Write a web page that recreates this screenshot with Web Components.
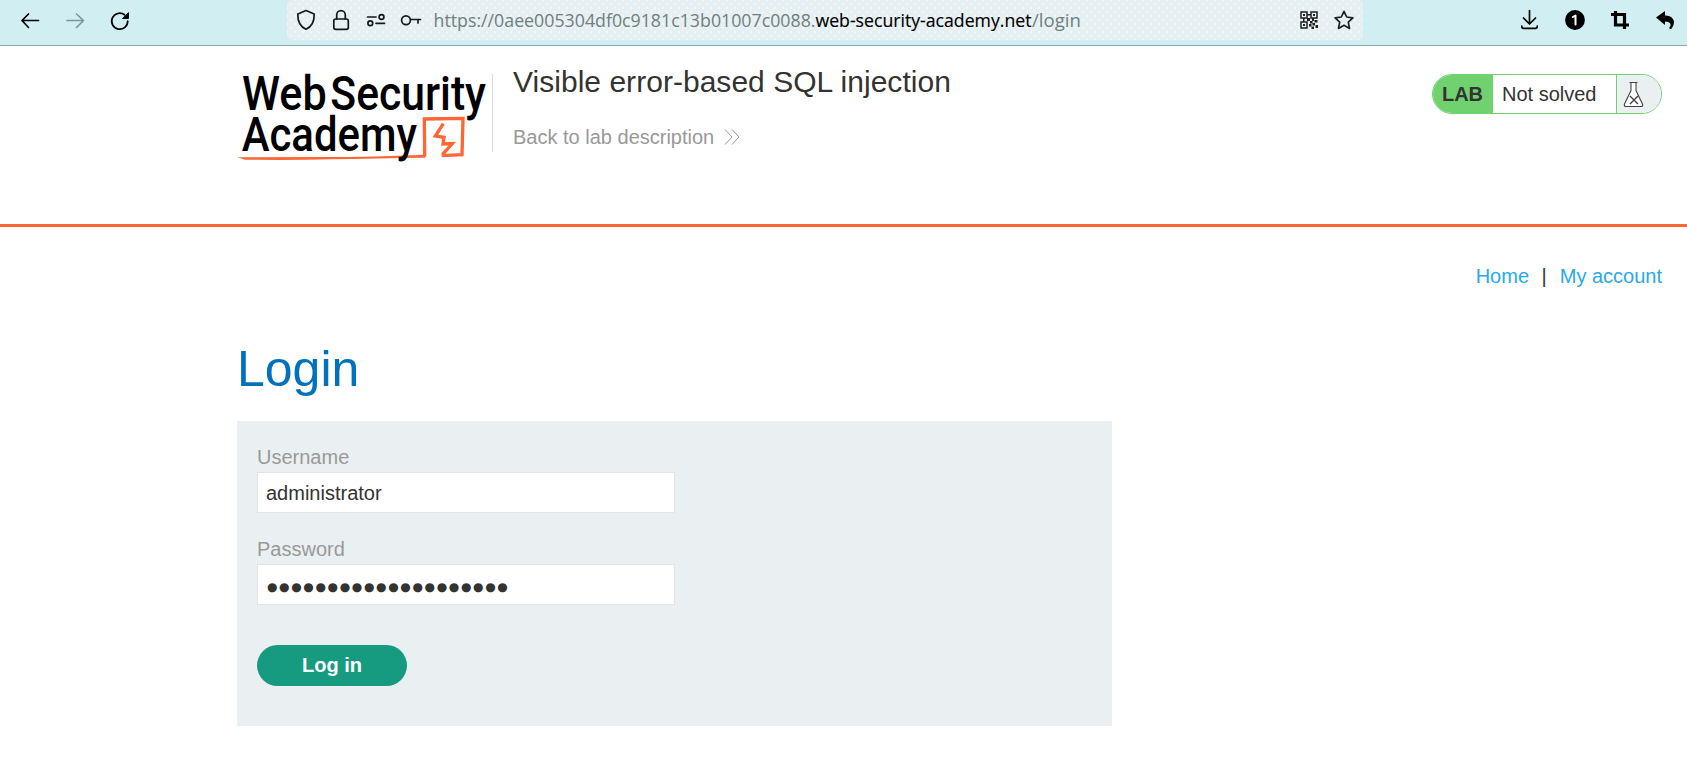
<!DOCTYPE html>
<html lang="en">
<head>
<meta charset="utf-8">
<title>Visible error-based SQL injection</title>
<style>
html,body{margin:0;height:100%;background:#fff;overflow:hidden}
body{font:20px/24px "Liberation Sans",Arial,sans-serif;color:#333332}
</style>
</head>
<body>
<lab-page></lab-page>
<script>
function define(name, html){
  const t = document.createElement('template');
  t.innerHTML = html;
  customElements.define(name, class extends HTMLElement{
    constructor(){ super(); this.attachShadow({mode:'open'}).append(t.content.cloneNode(true)); }
  });
}

define('browser-bar', `<style>
:host{display:flex;height:45px;background:#d1eef3;border-bottom:1px solid #8fa8ab;box-sizing:content-box}
svg{display:block;flex:none;fill:none;stroke:#000;stroke-width:1.7;stroke-linecap:round;stroke-linejoin:round}
.nav{width:287px;flex:none}
.url{width:1076px;height:40px;flex:none;display:flex;border-radius:5px;background-color:#e6eff2;background-image:radial-gradient(circle,#edf9fa 0.8px,transparent 1.1px),radial-gradient(circle,#edf9fa 0.8px,transparent 1.1px);background-size:8px 8px;background-position:0 0,4px 4px}
text{font:18.6px "Open Sans","Noto Sans",sans-serif;stroke:none;fill:#70807f}
.d{fill:#000;stroke:#000;stroke-width:.15}
</style>
<svg class="nav" width="287" height="45" viewBox="0 0 287 45">
<path d="M38.500 20.500H22M28.500 14L22 20.500L28.500 27.500"/>
<path stroke="#7f9799" d="M67 20.500H83.500M76.500 14L83.500 20.500L76.500 27.500"/>
<path d="M127.700 21A8 8 0 1 1 124.500 14.800"/><path d="M128.500 13v5.500h-5.500z" fill="#000" stroke-width="1"/>
</svg>
<div class="url">
<svg width="1076" height="40" viewBox="287 0 1076 40">
<g stroke="#15191a">
<path d="M306 10.500L314.200 14Q314.500 25.500 306 29.200Q297.500 25.500 297.800 14Z"/>
<rect x="333.800" y="19" width="14.500" height="10.300" rx="2"/><path d="M336.700 19v-4a4.300 4.300 0 0 1 8.600 0v4"/>
<path d="M367.500 17h8.500M376 23.300h8.500"/><circle cx="381.500" cy="17" r="2.400"/><circle cx="370.300" cy="23.300" r="2.400"/>
<circle cx="406" cy="20.200" r="4.400"/><path d="M411 19.500h9.500M418 19.500v3.500"/>
</g>
<text x="433.500" y="27" textLength="382" lengthAdjust="spacingAndGlyphs">https://0aee005304df0c9181c13b01007c0088.</text>
<text class="d" x="815.500" y="27" textLength="216" lengthAdjust="spacingAndGlyphs">web-security-academy.net</text>
<text x="1032" y="27" textLength="49" lengthAdjust="spacingAndGlyphs">/login</text>
<g stroke="#1c2021" stroke-width="1.500" stroke-linejoin="miter" stroke-linecap="butt"><rect x="1301" y="12" width="6" height="6"/><rect x="1311" y="12" width="6" height="6"/><rect x="1301" y="22" width="6" height="6"/></g>
<path stroke="none" fill="#1c2021" d="M1303 14h2v2h-2zM1313 14h2v2h-2zM1303 24h2v2h-2zM1307 14h4v1.500h-4zM1303 18h1.500v4h-1.500zM1307 18h3v3h-3zM1312 18h2v3h-2zM1310 21h2.500v2.500h-2.500zM1314.500 20h3v2.500h-3zM1312.500 23h2.500v2.500h-2.500zM1309 24h2.500v2.500h-2.500zM1315.500 25h2.500v3h-2.500zM1311.500 26.500h2.500v2.500h-2.500z"/>
<path stroke="#1c2021" d="M1344 11.300l2.700 5.700 6.200.8-4.600 4.300 1.200 6.300-5.500-3.100-5.500 3.100 1.200-6.300-4.600-4.300 6.200-.8z"/>
</svg></div>
<svg width="324" height="45" viewBox="1363 0 324 45">
<path d="M1529.500 10.500v13M1523.500 18l6 6 6-6M1521.800 26v.5q0 1.800 1.800 1.800h11.800q1.800 0 1.800-1.800v-.5"/>
<circle cx="1575" cy="20" r="9.900" fill="#000" stroke="none"/><path stroke="#fff" stroke-width="2" d="M1572.800 17l2.700-1.500v9"/>
<path stroke-linecap="butt" stroke-linejoin="miter" stroke-width="3.200" d="M1611 14.500h13.500v14.500M1615.500 11v14h13.500"/>
<path stroke="none" fill="#000" d="M1656 17.500l9-6.500v4.500c8 0 12 6 6.500 13.200-1 .5-2 .2-2.500-.7 3.500-3.500 1-6.500-4-6.500v3.500z"/>
</svg>`);

define('academy-logo', `<style>:host{display:block;width:250px;height:94px}svg{display:block;overflow:visible}text{font:500 144px Roboto,sans-serif;fill:#000}</style>
<svg width="250" height="94" viewBox="36 30 750 282">
<text x="51" y="151" textLength="254" lengthAdjust="spacingAndGlyphs">Web</text>
<text x="316" y="151" textLength="467" lengthAdjust="spacingAndGlyphs">Security</text>
<path fill="none" stroke="#f63" stroke-width="10" d="M599 290L598 177L714 175L711 284L650 287M655 191L631 228L657 232L654 252L682 251L652 284"/>
<path fill="#f63" d="M37 292Q180 291 310 291T600 284V293Q450 295 320 298T60 299Z"/>
<text x="50" y="272" textLength="526" lengthAdjust="spacingAndGlyphs">Academy</text>
</svg>`);

define('lab-status', `<style>
:host{display:flex;box-sizing:border-box;width:230px;height:40px;border:1px solid #70d26f;border-radius:20px;overflow:hidden;line-height:38px}
b{width:60px;padding-right:1px;box-sizing:border-box;background:#70d26f;text-align:center}
span{width:124px;padding-left:9px;box-sizing:border-box;border-right:1px solid #70d26f}
i{flex:1;background:#eaeff1}svg{display:block;fill:#fff;stroke:#444;stroke-width:1.1}
</style><b><slot name="label"></slot></b><span><slot></slot></span>
<i><svg width="36" height="38" viewBox="1617 75 36 38"><path d="M1629.500 82.500h8M1631 82.500v8L1624.500 104q-.8 2.500 1.500 2.500h15q2.300 0 1.500-2.500L1636 90.500v-8"/><path stroke-width="1.400" d="M1630 96l8 8M1638 96l-8 8"/></svg></i>`);

define('lab-header', `<style>
:host{display:flex;box-sizing:border-box;height:181px;border-bottom:3px solid #f63;padding:24px 25px 0 237px;align-items:flex-start}
.t{margin:4px 0 0 5px;height:78px;border-left:1px solid #ddd;padding-left:20px;flex:1}
h2{font-weight:400;font-size:30px;letter-spacing:.03px;line-height:34px;margin:-9px 0 26px}
a{color:#999;display:flex;align-items:center;line-height:24px}
svg{margin-left:9px;fill:none;stroke:#999}
lab-status{margin-top:4px}
</style><academy-logo></academy-logo>
<div class="t"><h2>Visible error-based SQL injection</h2><a>Back to lab description<svg width="17" height="16"><path d="M2 .500l7 7.500-7 7.500M9 .500l7 7.500-7 7.500"/></svg></a></div>
<lab-status><span slot="label">LAB</span>Not solved</lab-status>`);

define('form-field', `<style>
:host{display:block;width:418px}
label{display:block;color:#999;line-height:24px;margin-bottom:3px}
div{box-sizing:border-box;height:41px;border:1px solid #e4e4e4;background:#fff;padding-left:8px;line-height:40px}
</style><label><slot name="label"></slot></label><div><slot></slot></div>`);

define('login-form', `<style>
:host{display:flex;flex-direction:column;box-sizing:border-box;width:875px;height:305px;background:#eaf0f1;padding:24px 20px 0;gap:24px}
button{font:bold 20px/24px "Liberation Sans",Arial,sans-serif;color:#fff;background:#169b80;border:0;border-radius:21px;width:150px;height:41px;padding:0 0 2px;margin-top:16px}
.p{font:12px/12px "DejaVu Sans",sans-serif;letter-spacing:1.65px;padding-left:1px;vertical-align:1.5px}
</style>
<form-field><span slot="label">Username</span>administrator</form-field>
<form-field><span slot="label">Password</span><span class="p">●●●●●●●●●●●●●●●●●●●●</span></form-field>
<button>Log in</button>`);

define('lab-page', `<style>
:host{display:block}
nav{display:flex;justify-content:flex-end;padding:37px 25px 0 0;line-height:24px;color:#333}
a{color:#29a9e8}nav span{margin:0 13px 0 12.500px}
main{padding-left:237px}
h1{font-size:50px;line-height:58px;font-weight:400;color:#0071bc;margin:52px 0 23px}
</style>
<browser-bar></browser-bar>
<lab-header></lab-header>
<nav><a>Home</a><span>|</span><a>My account</a></nav>
<main><h1>Login</h1><login-form></login-form></main>`);
</script>
</body>
</html>
